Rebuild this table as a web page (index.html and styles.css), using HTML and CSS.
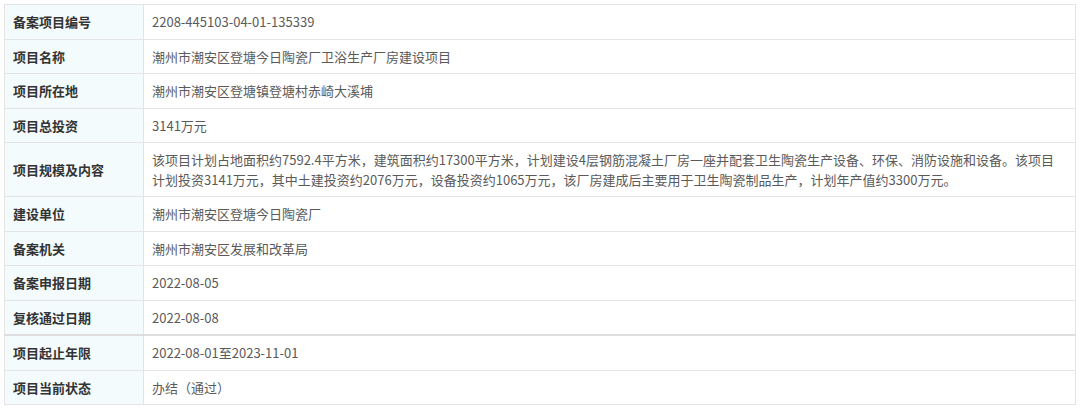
FILE: index.html
```html
<!DOCTYPE html>
<html lang="zh-CN">
<head>
<meta charset="utf-8">
<link rel="stylesheet" href="styles.css">
</head>
<body>
<table class="info">
  <tr><th>备案项目编号</th><td>2208-445103-04-01-135339</td></tr>
  <tr><th>项目名称</th><td>潮州市潮安区登塘今日陶瓷厂卫浴生产厂房建设项目</td></tr>
  <tr><th>项目所在地</th><td>潮州市潮安区登塘镇登塘村赤崎大溪埔</td></tr>
  <tr><th>项目总投资</th><td>3141万元</td></tr>
  <tr><th>项目规模及内容</th><td>该项目计划占地面积约7592.4平方米，建筑面积约17300平方米，计划建设4层钢筋混凝土厂房一座并配套卫生陶瓷生产设备、环保、消防设施和设备。该项目<br>计划投资3141万元，其中土建投资约2076万元，设备投资约1065万元，该厂房建成后主要用于卫生陶瓷制品生产，计划年产值约3300万元。</td></tr>
  <tr><th>建设单位</th><td>潮州市潮安区登塘今日陶瓷厂</td></tr>
  <tr><th>备案机关</th><td>潮州市潮安区发展和改革局</td></tr>
  <tr><th>备案申报日期</th><td>2022-08-05</td></tr>
  <tr class="strong-bottom"><th>复核通过日期</th><td>2022-08-08</td></tr>
  <tr><th>项目起止年限</th><td>2022-08-01至2023-11-01</td></tr>
  <tr><th>项目当前状态</th><td>办结（通过）</td></tr>
</table>
</body>
</html>
```

FILE: styles.css
```css
html, body {
  margin: 0;
  padding: 0;
  background: #ffffff;
}

body {
  padding: 4px 4px 0 4px;
  font-family: "Microsoft YaHei", "Noto Sans CJK SC", "Noto Sans", sans-serif;
  font-size: 13px;
}

.info {
  width: 1072px;
  border-collapse: collapse;
  table-layout: fixed;
  border: 1px solid #e4e4e4;
}

.info th,
.info td {
  border: 1px solid #e4e4e4;
  padding: 7px 8px 7px 8px;
  line-height: 19.5px;
  text-align: left;
  vertical-align: middle;
}

.info th {
  width: 122px;
  background: #f4fbfc;
  color: #333333;
  font-weight: bold;
}

.info td {
  color: #5a5a5a;
  font-weight: normal;
}

.info tr.strong-bottom th,
.info tr.strong-bottom td {
  border-bottom: 2px solid #dedede;
}
```
